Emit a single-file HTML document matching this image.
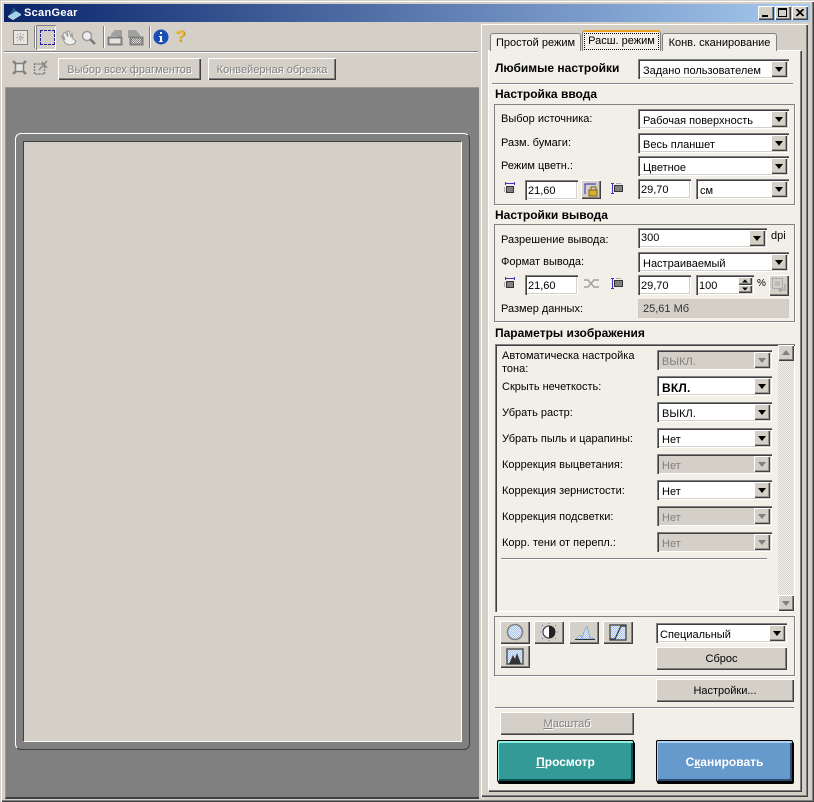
<!DOCTYPE html>
<html><head><meta charset="utf-8"><style>
*{box-sizing:border-box}
html,body{margin:0;padding:0;width:814px;height:802px;overflow:hidden;background:#d4d0c8}
body{position:relative;font:11px/13px "Liberation Sans",sans-serif;color:#000}
div,span.a,svg{position:absolute}
.t{white-space:nowrap;height:13px;margin-top:1px}
.b{font-weight:bold;font-size:12px;white-space:nowrap;margin-top:1px;margin-left:-1px}
.c{background:#fff;height:20px;box-shadow:inset 1px 1px 0 #808080,inset 2px 2px 0 #404040,inset -1px -1px 0 #fff,inset -2px -2px 0 #d4d0c8;white-space:nowrap;line-height:15px;padding:5px 0 0 5px}
.c i{position:absolute;right:2px;top:2px;bottom:2px;width:16px;background:#d4d0c8;box-shadow:inset 1px 1px 0 #fff,inset -1px -1px 0 #404040,inset -2px -2px 0 #9a9892}
.c i:after{content:"";position:absolute;left:4px;top:6px;border-left:4px solid transparent;border-right:4px solid transparent;border-top:5px solid #000}
.d{background:#d4d0c8;color:#808080}
.d i:after{border-top-color:#808080}
.e{background:#fff;height:20px;box-shadow:inset 1px 1px 0 #808080,inset 2px 2px 0 #404040,inset -1px -1px 0 #fff,inset -2px -2px 0 #d4d0c8;padding:4px 0 0 3px;line-height:14px}
.g{border:1px solid #808080;box-shadow:1px 1px 0 #fff}
.p{background:#d4d0c8;text-align:center;box-shadow:inset 1px 1px 0 #fff,inset -1px -1px 0 #404040,inset -2px -2px 0 #808080}
.o{color:#808080;text-shadow:1px 1px 0 #fff}
.h{height:1px;background:#808080;box-shadow:0 1px 0 #fff}
.v{width:1px;background:#808080;box-shadow:1px 0 0 #fff}
.bg{color:#fff;font-weight:bold;font-size:12px;text-align:center;line-height:42px;border:1px solid #000;border-radius:2px;box-shadow:1px 2px 0 #000}
.tb{background:#f1efe8;border:1px solid #808080;border-bottom:0;border-radius:3px 3px 0 0;text-align:center;white-space:nowrap}
u{text-decoration:underline}
</style></head><body>
<svg width="0" height="0" style="left:0;top:0"><defs><pattern id="dt" width="2" height="2" patternUnits="userSpaceOnUse"><rect width="2" height="2" fill="#a8c4f0"/><rect width="1" height="1" fill="#e8eef8"/><rect x="1" y="1" width="1" height="1" fill="#e8eef8"/></pattern><pattern id="gd" width="2" height="2" patternUnits="userSpaceOnUse"><rect width="2" height="2" fill="#e4e2dc"/><rect width="1" height="1" fill="#808080"/><rect x="1" y="1" width="1" height="1" fill="#808080"/></pattern></defs></svg>
<div style="left:0;top:0;width:814px;height:802px;box-shadow:inset 1px 1px 0 #d4d0c8,inset 2px 2px 0 #fff,inset -1px -1px 0 #404040,inset -2px -2px 0 #808080"></div>
<div style="left:4px;top:4px;width:806px;height:18px;background:linear-gradient(90deg,#0a246a,#a6caf0)"></div>
<svg style="left:6px;top:5px" width="16" height="16" viewBox="0 0 16 16"><path d="M2 11 L10 6 L15 9 L7 14Z" fill="#9fd4e8"/><path d="M2 11 L7 14 L15 9 L15 10 L7 15 L2 12Z" fill="#e8f4fa"/><path d="M4 9 L8 2 L10 6Z" fill="#2a5a7a"/></svg>
<div class="t" style="left:24px;top:6px;color:#fff;font-weight:bold;font-size:11px;letter-spacing:.3px">ScanGear</div>
<div class="p" style="left:758px;top:6px;width:16px;height:14px"><div style="left:4px;top:9px;width:6px;height:2px;background:#000"></div></div>
<div class="p" style="left:775px;top:6px;width:16px;height:14px"><div style="left:3px;top:2px;width:9px;height:9px;border:1px solid #000;border-top-width:2px"></div></div>
<div class="p" style="left:792px;top:6px;width:16px;height:14px"><svg style="left:4px;top:3px" width="8" height="8"><path d="M0 0L7 7M1 0L8 7M7 0L0 7M8 0L1 7" stroke="#000"/></svg></div>

<!-- toolbar -->
<svg style="left:13px;top:30px" width="15" height="15"><rect x=".5" y=".5" width="14" height="14" fill="#e8e6e0" stroke="#808080"/><path d="M7.500 3V12M3 7.500H12M4 4L11 11M11 4L4 11" stroke="#aaa" stroke-dasharray="2 1"/></svg>
<div class="v" style="left:34px;top:26px;height:22px"></div>
<div style="left:36px;top:25px;width:20px;height:25px;box-shadow:inset 1px 1px 0 #808080,inset -1px -1px 0 #fff"></div>
<div style="left:40px;top:30px;width:15px;height:15px;border:1px dashed #1c1c9c"></div>
<svg style="left:60px;top:29px" width="17" height="17"><path d="M1 6L5 11L3 5L5 3L8 8L7 2L9 2L11 8L12 5L13 10L16 12L14 15L9 16L5 14Z" fill="#f0f0ec" stroke="#999"/><path d="M8 16L14 15L16 12L16 14L13 16Z" fill="#999"/></svg>
<svg style="left:81px;top:30px" width="15" height="16"><circle cx="6" cy="6" r="4.500" fill="#eee" stroke="#999" stroke-width="1.500"/><path d="M9.500 9.500L14 14" stroke="#777" stroke-width="2.500"/></svg>
<div class="v" style="left:103px;top:26px;height:22px"></div>
<svg style="left:107px;top:29px" width="16" height="17"><path d="M4 5L8 1H15V12H10V7H4Z" fill="#a0a0a0"/><rect x="1.500" y="8.500" width="13" height="7" fill="#e4e2dc" stroke="#808080" stroke-width="2"/></svg>
<svg style="left:127px;top:29px" width="17" height="17"><path d="M1 1H9L13 6V9H1Z" fill="#a0a0a0"/><rect x="3.500" y="8.500" width="12" height="7" fill="url(#gd)" stroke="#808080" stroke-width="2"/></svg>
<div class="v" style="left:149px;top:26px;height:22px"></div>
<svg style="left:153px;top:29px" width="16" height="16"><circle cx="8" cy="8" r="7.500" fill="#1b4fb8"/><rect x="7" y="3" width="2" height="2" fill="#fff"/><path d="M6 7H9V12H10V13H6V12H7V8H6Z" fill="#fff"/></svg>
<div class="t" style="left:175px;top:27px;font-size:17px;font-weight:bold;line-height:18px;height:18px;color:#e8b838;text-shadow:1px 0 0 #b08820">?</div>
<div class="h" style="left:4px;top:51px;width:474px"></div>
<svg style="left:12px;top:60px" width="15" height="15"><path d="M1 1L14 14M14 1L1 14" stroke="#808080" stroke-width="2.500"/><rect x="3.500" y="3.500" width="8" height="8" fill="#e8e6e0" stroke="#808080" stroke-width="1.500"/></svg>
<svg style="left:33px;top:60px" width="16" height="15"><rect x="1.500" y="4" width="10" height="10" fill="none" stroke="#808080" stroke-width="1.500" stroke-dasharray="2 1"/><path d="M6 10L14 1M9 2L14 8" stroke="#888" stroke-width="1.500"/></svg>
<div class="p o" style="left:58px;top:58px;width:143px;height:22px;line-height:24px">Выбор всех фрагментов</div>
<div class="p o" style="left:208px;top:58px;width:128px;height:22px;line-height:24px">Конвейерная обрезка</div>

<!-- preview -->
<div style="left:5px;top:87px;width:474px;height:712px;background:#808080;border-top:1px solid #9a9892;border-left:1px solid #9a9892;border-bottom:2px solid #404040"></div>
<div style="left:15px;top:133px;width:455px;height:617px;border:1px solid #fff;border-right-color:#404040;border-bottom-color:#404040;border-radius:6px"></div>
<div style="left:23px;top:141px;width:439px;height:601px;background:#d4d0c8;border:1px solid #404040;border-right-color:#fff;border-bottom-color:#fff"></div>

<!-- right panel -->
<div style="left:481px;top:24px;width:327px;height:773px;box-shadow:inset 1px 1px 0 #fff,inset -1px -1px 0 #404040,inset -2px -2px 0 #808080"></div>
<div style="left:488px;top:50px;width:313px;height:741px;background:#f1efe8;border-left:1px solid #fff;border-top:1px solid #fff;box-shadow:inset -1px -1px 0 #808080,1px 1px 0 #404040"></div>
<div class="tb" style="left:490px;top:33px;width:91px;height:18px;line-height:19px">Простой режим</div>
<div class="tb" style="left:662px;top:33px;width:115px;height:18px;line-height:19px">Конв. сканирование</div>
<div class="tb" style="left:582px;top:30px;width:79px;height:21px;line-height:19px;border-top:2px solid #f0a020"><span style="display:block;margin:1px 1px 0;height:17px;line-height:15px;border:1px dotted #000">Расш. режим</span></div>

<div class="b" style="left:496px;top:61px">Любимые настройки</div>
<div class="c" style="left:638px;top:59px;width:151px">Задано пользователем<i></i></div>
<div class="h" style="left:492px;top:83px;width:301px"></div>

<div class="b" style="left:496px;top:87px">Настройка ввода</div>
<div class="g" style="left:494px;top:104px;width:301px;height:101px"></div>
<div class="t" style="left:501px;top:112px">Выбор источника:</div>
<div class="c" style="left:638px;top:109px;width:151px">Рабочая поверхность<i></i></div>
<div class="t" style="left:501px;top:136px">Разм. бумаги:</div>
<div class="c" style="left:638px;top:133px;width:151px">Весь планшет<i></i></div>
<div class="t" style="left:501px;top:159px">Режим цветн.:</div>
<div class="c" style="left:638px;top:156px;width:151px">Цветное<i></i></div>
<svg style="left:503px;top:182px" width="13" height="13"><rect x="3.500" y="4.500" width="7" height="6" fill="#808080" stroke="#333"/><path d="M2.500 0V3M11.500 0V3M2.500 1.500H11.500" stroke="#3838c0" fill="none"/><path d="M1.500 5V10" stroke="#aaa"/></svg>
<div class="e" style="left:525px;top:180px;width:53px">21,60</div>
<div class="p" style="left:581px;top:180px;width:20px;height:19px"></div>
<svg style="left:583px;top:182px" width="16" height="15"><path d="M2 12V2H13" stroke="#2828c0" fill="none"/><rect x="6" y="8" width="8" height="6" fill="#d8b030" stroke="#806010"/><path d="M8 8V5H13V8" stroke="#806010" fill="none"/></svg>
<svg style="left:611px;top:182px" width="13" height="13"><rect x="3.500" y="3.500" width="8" height="6" fill="#808080" stroke="#333"/><path d="M0 1.500H3M0 11.500H3M1.500 1.500V11.500" stroke="#3838c0"/><path d="M5 1.500H10" stroke="#aaa"/></svg>
<div class="e" style="left:638px;top:179px;width:53px">29,70</div>
<div class="c" style="left:696px;top:179px;width:93px;padding-left:4px">см<i></i></div>

<div class="b" style="left:496px;top:208px">Настройки вывода</div>
<div class="g" style="left:494px;top:224px;width:301px;height:98px"></div>
<div class="t" style="left:501px;top:233px">Разрешение вывода:</div>
<div class="c" style="left:638px;top:228px;width:129px;padding-left:3px;padding-top:3px">300<i></i></div>
<div class="t" style="left:771px;top:229px">dpi</div>
<div class="t" style="left:501px;top:255px">Формат вывода:</div>
<div class="c" style="left:638px;top:252px;width:151px">Настраиваемый<i></i></div>
<svg style="left:503px;top:277px" width="13" height="13"><rect x="3.500" y="4.500" width="7" height="6" fill="#808080" stroke="#333"/><path d="M2.500 0V3M11.500 0V3M2.500 1.500H11.500" stroke="#3838c0" fill="none"/><path d="M1.500 5V10" stroke="#aaa"/></svg>
<div class="e" style="left:525px;top:275px;width:53px">21,60</div>
<svg style="left:584px;top:279px" width="15" height="10"><path d="M0 1H4L10 8H15M0 8H4L10 1H15" stroke="#a0a0a0" fill="none" stroke-width="1.500"/></svg>
<svg style="left:611px;top:277px" width="13" height="13"><rect x="3.500" y="3.500" width="8" height="6" fill="#808080" stroke="#333"/><path d="M0 1.500H3M0 11.500H3M1.500 1.500V11.500" stroke="#3838c0"/><path d="M5 1.500H10" stroke="#aaa"/></svg>
<div class="e" style="left:638px;top:275px;width:53px">29,70</div>
<div class="e" style="left:696px;top:275px;width:58px">100<div class="p" style="left:42px;top:2px;width:14px;height:8px"><svg style="left:4px;top:2px" width="6" height="4"><path d="M0 3.500L3 .5L6 3.500Z" fill="#000"/></svg></div><div class="p" style="left:42px;top:10px;width:14px;height:8px"><svg style="left:4px;top:2px" width="6" height="4"><path d="M0 .5L3 3.500L6 .5Z" fill="#000"/></svg></div></div>
<div class="t" style="left:757px;top:276px;font-size:10px">%</div>
<div class="p" style="left:769px;top:275px;width:20px;height:21px"></div>
<svg style="left:772px;top:278px" width="15" height="15"><rect x=".5" y=".5" width="10" height="10" fill="none" stroke="#999" stroke-dasharray="2 1"/><rect x="3" y="3" width="5" height="5" fill="#bbb"/><path d="M13 6V12H7M9 10L7 12L9 14" stroke="#999" fill="none"/></svg>
<div class="t" style="left:501px;top:302px">Размер данных:</div>
<div style="left:638px;top:299px;width:151px;height:19px;background:#d4d0c8;padding:4px 0 0 5px;color:#333;box-shadow:inset 0 0 0 1px #cfcbc3">25,61 Мб</div>

<div class="b" style="left:496px;top:326px">Параметры изображения</div>
<div style="left:495px;top:344px;width:300px;height:268px;box-shadow:inset 1px 1px 0 #808080,inset 2px 2px 0 #404040,inset -1px -1px 0 #fff"></div>
<div style="left:778px;top:345px;width:16px;height:266px;background:repeating-conic-gradient(#d4d0c8 0 25%,#f4f4f0 0 50%) 0 0/2px 2px"></div>
<div class="p" style="left:778px;top:345px;width:16px;height:16px"><svg style="left:3px;top:5px" width="10" height="5"><path d="M1 5L5 0L9 5Z" fill="#808080"/></svg></div>
<div class="p" style="left:778px;top:595px;width:16px;height:16px"><svg style="left:3px;top:6px" width="10" height="5"><path d="M1 0L5 5L9 0Z" fill="#808080"/></svg></div>

<div class="t" style="left:502px;top:349px">Автоматическа настройка</div>
<div class="t" style="left:502px;top:362px">тона:</div>
<div class="c d" style="left:657px;top:350px;width:115px">ВЫКЛ.<i></i></div>
<div class="t" style="left:502px;top:380px">Скрыть нечеткость:</div>
<div class="c" style="left:657px;top:376px;width:115px;font-weight:bold;font-size:12px;letter-spacing:.2px">ВКЛ.<i></i></div>
<div class="t" style="left:502px;top:406px">Убрать растр:</div>
<div class="c" style="left:657px;top:402px;width:115px">ВЫКЛ.<i></i></div>
<div class="t" style="left:502px;top:432px">Убрать пыль и царапины:</div>
<div class="c" style="left:657px;top:428px;width:115px">Нет<i></i></div>
<div class="t" style="left:502px;top:458px">Коррекция выцветания:</div>
<div class="c d" style="left:657px;top:454px;width:115px">Нет<i></i></div>
<div class="t" style="left:502px;top:484px">Коррекция зернистости:</div>
<div class="c" style="left:657px;top:480px;width:115px">Нет<i></i></div>
<div class="t" style="left:502px;top:510px">Коррекция подсветки:</div>
<div class="c d" style="left:657px;top:506px;width:115px">Нет<i></i></div>
<div class="t" style="left:502px;top:536px">Корр. тени от перепл.:</div>
<div class="c d" style="left:657px;top:532px;width:115px">Нет<i></i></div>
<div class="h" style="left:501px;top:558px;width:266px"></div>

<div class="g" style="left:494px;top:616px;width:301px;height:60px"></div>
<div class="p" style="left:500px;top:621px;width:30px;height:23px"></div>
<svg style="left:506px;top:623px" width="18" height="18"><circle cx="9" cy="9" r="7.500" fill="url(#dt)" stroke="#808080" stroke-width="1.500"/></svg>
<div class="p" style="left:534px;top:621px;width:30px;height:23px"></div>
<svg style="left:540px;top:623px" width="18" height="18"><circle cx="9" cy="9" r="6" fill="#fff" stroke="#222"/><path d="M9 3A6 6 0 0 1 9 15Z" fill="#222"/><path d="M9 0V1M9 17V18M0 9H1M17 9H18M2 2L3 3M15 15L16 16M2 16L3 15M15 3L16 2" stroke="#5a8ac0"/></svg>
<div class="p" style="left:569px;top:621px;width:30px;height:23px"></div>
<svg style="left:575px;top:624px" width="20" height="17"><path d="M1 15L5 11L7 14L9 8L12 2L15 14H19V15H1Z" fill="url(#dt)" stroke="#5a8ac0" stroke-width=".5"/><path d="M0 15.500H20" stroke="#333"/></svg>
<div class="p" style="left:603px;top:621px;width:30px;height:23px"></div>
<svg style="left:609px;top:624px" width="18" height="17"><rect x="1" y="1" width="16" height="15" fill="url(#dt)" stroke="#555" stroke-width="1.500"/><path d="M1 15H6L12 2H17" stroke="#333" stroke-width="1.200" fill="none"/></svg>
<div class="p" style="left:500px;top:645px;width:30px;height:23px"></div>
<svg style="left:506px;top:648px" width="18" height="17"><rect x="1" y="1" width="16" height="15" fill="url(#dt)" stroke="#555" stroke-width="1.500"/><path d="M3 16L7 7L9 11L11 5L15 16Z" fill="#333"/></svg>
<div class="c" style="left:656px;top:623px;width:131px;padding-left:4px">Специальный<i></i></div>
<div class="p" style="left:656px;top:647px;width:131px;height:23px;line-height:25px">Сброс</div>
<div class="p" style="left:656px;top:679px;width:138px;height:23px;line-height:25px">Настройки...</div>
<div class="h" style="left:495px;top:707px;width:299px"></div>
<div class="p o" style="left:500px;top:712px;width:134px;height:23px;line-height:25px"><u>М</u>асштаб</div>
<div class="bg" style="left:497px;top:740px;width:137px;height:42px;background:#339a98;box-shadow:inset 1px 2px 0 #90f0e0,inset -2px -2px 0 #10504f,1px 2px 0 #000"><u>П</u>росмотр</div>
<div class="bg" style="left:656px;top:740px;width:137px;height:42px;background:#6699cc;box-shadow:inset 1px 2px 0 #b0d0f0,inset -2px -2px 0 #2c4c70,1px 2px 0 #000">С<u>к</u>анировать</div>
</body></html>
